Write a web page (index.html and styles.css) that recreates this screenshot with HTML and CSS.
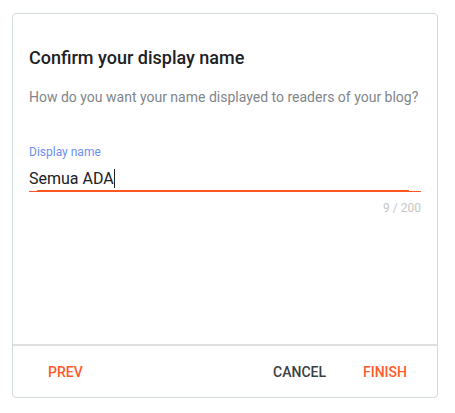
FILE: index.html
```html
<!DOCTYPE html>
<html lang="en">
<head>
  <meta charset="UTF-8">
  <meta name="viewport" content="width=device-width, initial-scale=1.0">
  <title>Confirm your display name</title>
  <link rel="stylesheet" href="styles.css">
</head>
<body>
  <div class="dialog">
    <div class="dialog-body">
      <h2 class="dialog-title">Confirm your display name</h2>
      <p class="dialog-text">How do you want your name displayed to readers of your blog?</p>

      <div class="field">
        <label class="field-label">Display name</label>
        <div class="field-input">Semua ADA<span class="caret"></span></div>
        <div class="field-line"><span class="field-line-active"></span></div>
        <div class="field-count">9 / 200</div>
      </div>
    </div>

    <div class="dialog-actions">
      <button class="btn btn-accent">PREV</button>
      <span class="spacer"></span>
      <button class="btn">CANCEL</button>
      <button class="btn btn-accent">FINISH</button>
    </div>
  </div>
</body>
</html>
```

FILE: styles.css
```css
body {
  margin: 0;
  padding: 13px 17px 15px 12px;
  background-color: #fff;
  font-family: Roboto, Arial, sans-serif;
  color: #202124;
}
.dialog {
  height: 385px;
  box-sizing: border-box;
  border: 1px solid #d3dade;
  border-radius: 4px;
  display: flex;
  flex-direction: column;
}
.dialog-body {
  flex: 1;
  padding: 32px 16px 0 16px;
}
.dialog-title {
  margin: 0;
  font-size: 18px;
  font-weight: 500;
  line-height: 24px;
  color: #202124;
}
.dialog-text {
  margin: 17px 0 0;
  font-size: 14px;
  line-height: 20px;
  color: #80868b;
}
.field {
  margin-top: 37px;
}
.field-label {
  display: block;
  font-size: 12px;
  line-height: 16px;
  color: #6d8ff5;
}
.field-input {
  margin-top: 8px;
  font-size: 16px;
  line-height: 22px;
  color: #202124;
}
.caret {
  display: inline-block;
  width: 1px;
  height: 19px;
  background-color: #202124;
  vertical-align: -4px;
}
.field-line {
  margin-top: 1px;
  height: 1px;
  background-color: #ff5722;
  position: relative;
}
.field-line-active {
  position: absolute;
  left: 8px;
  right: 12px;
  top: -1px;
  height: 2px;
  background-color: #ff5722;
}
.field-count {
  margin-top: 8px;
  text-align: right;
  font-size: 12px;
  line-height: 16px;
  color: #c4c7c9;
}
.dialog-actions {
  border-top: 2px solid #e0e0e0;
  height: 51px;
  display: flex;
  align-items: center;
  padding: 0 12px 0 17px;
  gap: 1px;
}
.spacer {
  flex: 1;
}
.btn {
  background: none;
  border: none;
  padding: 8px 18px;
  font-family: Roboto, Arial, sans-serif;
  font-size: 14px;
  font-weight: 500;
  color: #3c4043;
  cursor: pointer;
}
.btn-accent {
  color: #ff5a2a;
}
```
